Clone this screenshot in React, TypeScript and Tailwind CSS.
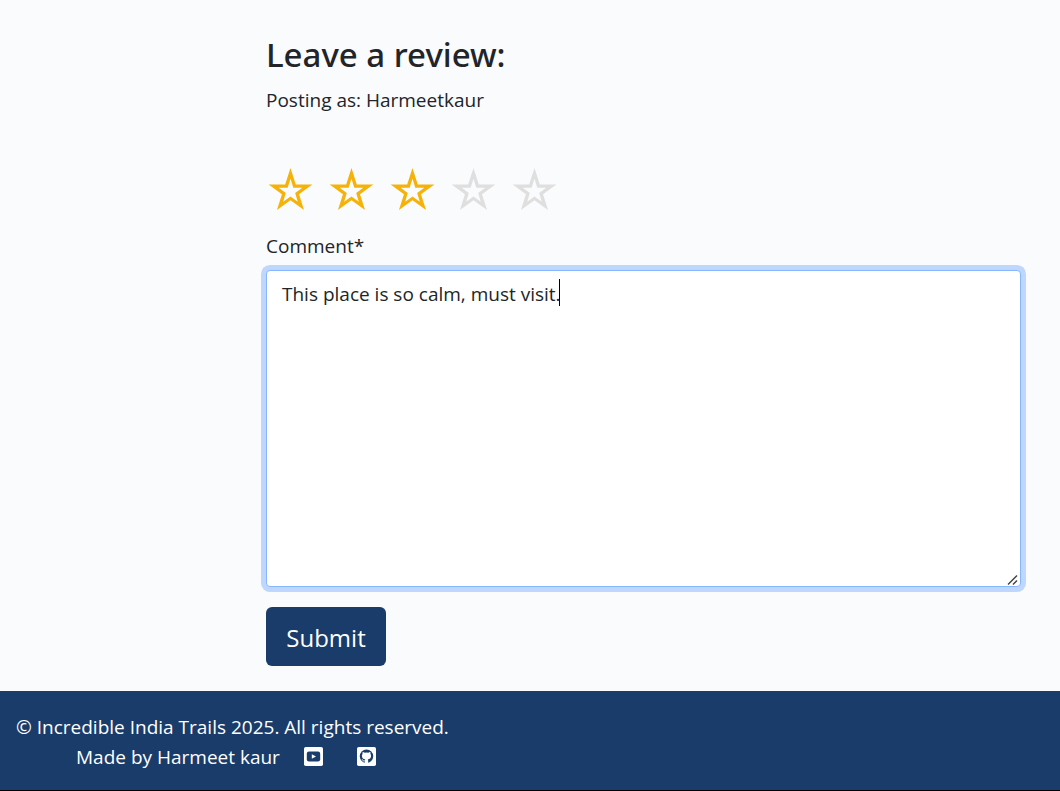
import { useState } from "react";

function Star({ filled }: { filled: boolean }) {
  return (
    <svg
      viewBox="-23.5 -24 48 48"
      aria-hidden="true"
      className={filled ? "size-[50px] text-[#f5b30a]" : "size-[50px] text-[#dfdfdf]"}
    >
      <path
        fill="currentColor"
        fillRule="evenodd"
        d="M0-22 5.1-6.3H21L8.2 3 13 18.3 0 8.9-13 18.3-8.2 3-21-6.3H-5.1ZM0-11.8 2.7-3.2H11.3L4.5 1.9 7 10.3 0 5.2-7 10.3-4.5 1.9-11.3-3.2H-2.7Z"
      />
    </svg>
  );
}

function YoutubeIcon() {
  return (
    <svg viewBox="0 0 19 19" aria-hidden="true" className="size-[19px]">
      <rect width="19" height="19" rx="1.8" fill="#fff" />
      <rect x="2.8" y="4.6" width="13.4" height="9.8" rx="2.2" fill="#1a3c6a" />
      <path d="M7.8 7.2v4.6l4.2-2.3Z" fill="#fff" />
    </svg>
  );
}

function GithubIcon() {
  return (
    <svg viewBox="0 0 19 19" aria-hidden="true" className="size-[19px]">
      <rect width="19" height="19" rx="1.8" fill="#fff" />
      <circle cx="9.5" cy="9.3" r="6.7" fill="#1a3c6a" />
      <path
        fill="#fff"
        d="M7.8 16.5v-2.2c-1.9.4-2.3-.8-2.7-1.5-.2-.3-.5-.5-.8-.7.9-.3 1.4.4 1.7.9.5.7 1.1.7 1.8.4.1-.5.3-.8.5-1-1.9-.3-3.4-1.1-3.4-3.6 0-.8.3-1.4.7-1.9-.2-.5-.2-1.3.1-2 .8 0 1.4.4 2 .8a7 7 0 0 1 3.6 0c.6-.4 1.2-.8 2-.8.3.7.3 1.5.1 2 .5.5.7 1.1.7 1.9 0 2.5-1.5 3.3-3.4 3.6.3.3.5.8.5 1.5v2.6Z"
      />
    </svg>
  );
}

export default function App() {
  const [rating, setRating] = useState(3);
  const [comment, setComment] = useState("This place is so calm, must visit.");

  return (
    <div className="flex min-h-screen flex-col border-b border-black bg-[#fafbfd] font-['Open_Sans','Segoe_UI',sans-serif] text-[19px] text-[#212529]">
      <main className="flex-1 pt-8 pr-[39px] pb-[25px] pl-[266px]">
        <h1 className="font-['Noto_Sans','Segoe_UI',sans-serif] text-[33px] leading-[46px] font-medium">
          Leave a review:
        </h1>
        <p className="mt-[7px] leading-[30px]">Posting as: Harmeetkaur</p>

        <form onSubmit={(e) => e.preventDefault()}>
          <div role="radiogroup" aria-label="Rating" className="mt-[51px] flex gap-[11px]">
            {[1, 2, 3, 4, 5].map((value) => (
              <label key={value} className="relative cursor-pointer">
                <input
                  type="radio"
                  name="rating"
                  value={value}
                  checked={rating === value}
                  onChange={() => setRating(value)}
                  aria-label={`${value} stars`}
                  className="absolute inset-0 cursor-pointer appearance-none"
                />
                <Star filled={value <= rating} />
              </label>
            ))}
          </div>

          <label htmlFor="comment" className="mt-[15px] block leading-[30px]">
            Comment*
          </label>
          <div className="relative mt-[9px] flex">
            <textarea
              id="comment"
              value={comment}
              onChange={(e) => setComment(e.target.value)}
              className="h-[317px] w-full resize-none rounded border border-[#86b7fe] bg-white px-[15px] py-2 leading-[30px] ring-5 ring-[#bfd7fe] outline-none"
            />
            <span aria-hidden="true" className="absolute top-[9px] left-[293px] h-[27px] w-px bg-black" />
            <svg
              viewBox="0 0 12 12"
              aria-hidden="true"
              className="pointer-events-none absolute right-[2px] bottom-[1px] size-3"
              fill="none"
              stroke="#444"
              strokeWidth="1.5"
            >
              <path d="M1 10.5 10 1.5M6 10.5 10 6.5" />
            </svg>
          </div>

          <button
            type="submit"
            className="mt-5 h-[59px] min-w-30 rounded-md bg-[#1a3c6a] px-5 pt-0.5 text-2xl text-white"
          >
            Submit
          </button>
        </form>
      </main>

      <footer className="flex flex-col items-start bg-[#1a3c6a] px-4 pt-[21px] pb-[18px] leading-[30px] text-white">
        <p>© Incredible India Trails 2025. All rights reserved.</p>
        <div className="flex items-center pl-[60px]">
          <span>Made by Harmeet kaur</span>
          <a href="#youtube" aria-label="YouTube" className="mb-0.5 ml-6">
            <YoutubeIcon />
          </a>
          <a href="#github" aria-label="GitHub" className="mb-0.5 ml-[34px]">
            <GithubIcon />
          </a>
        </div>
      </footer>
    </div>
  );
}
